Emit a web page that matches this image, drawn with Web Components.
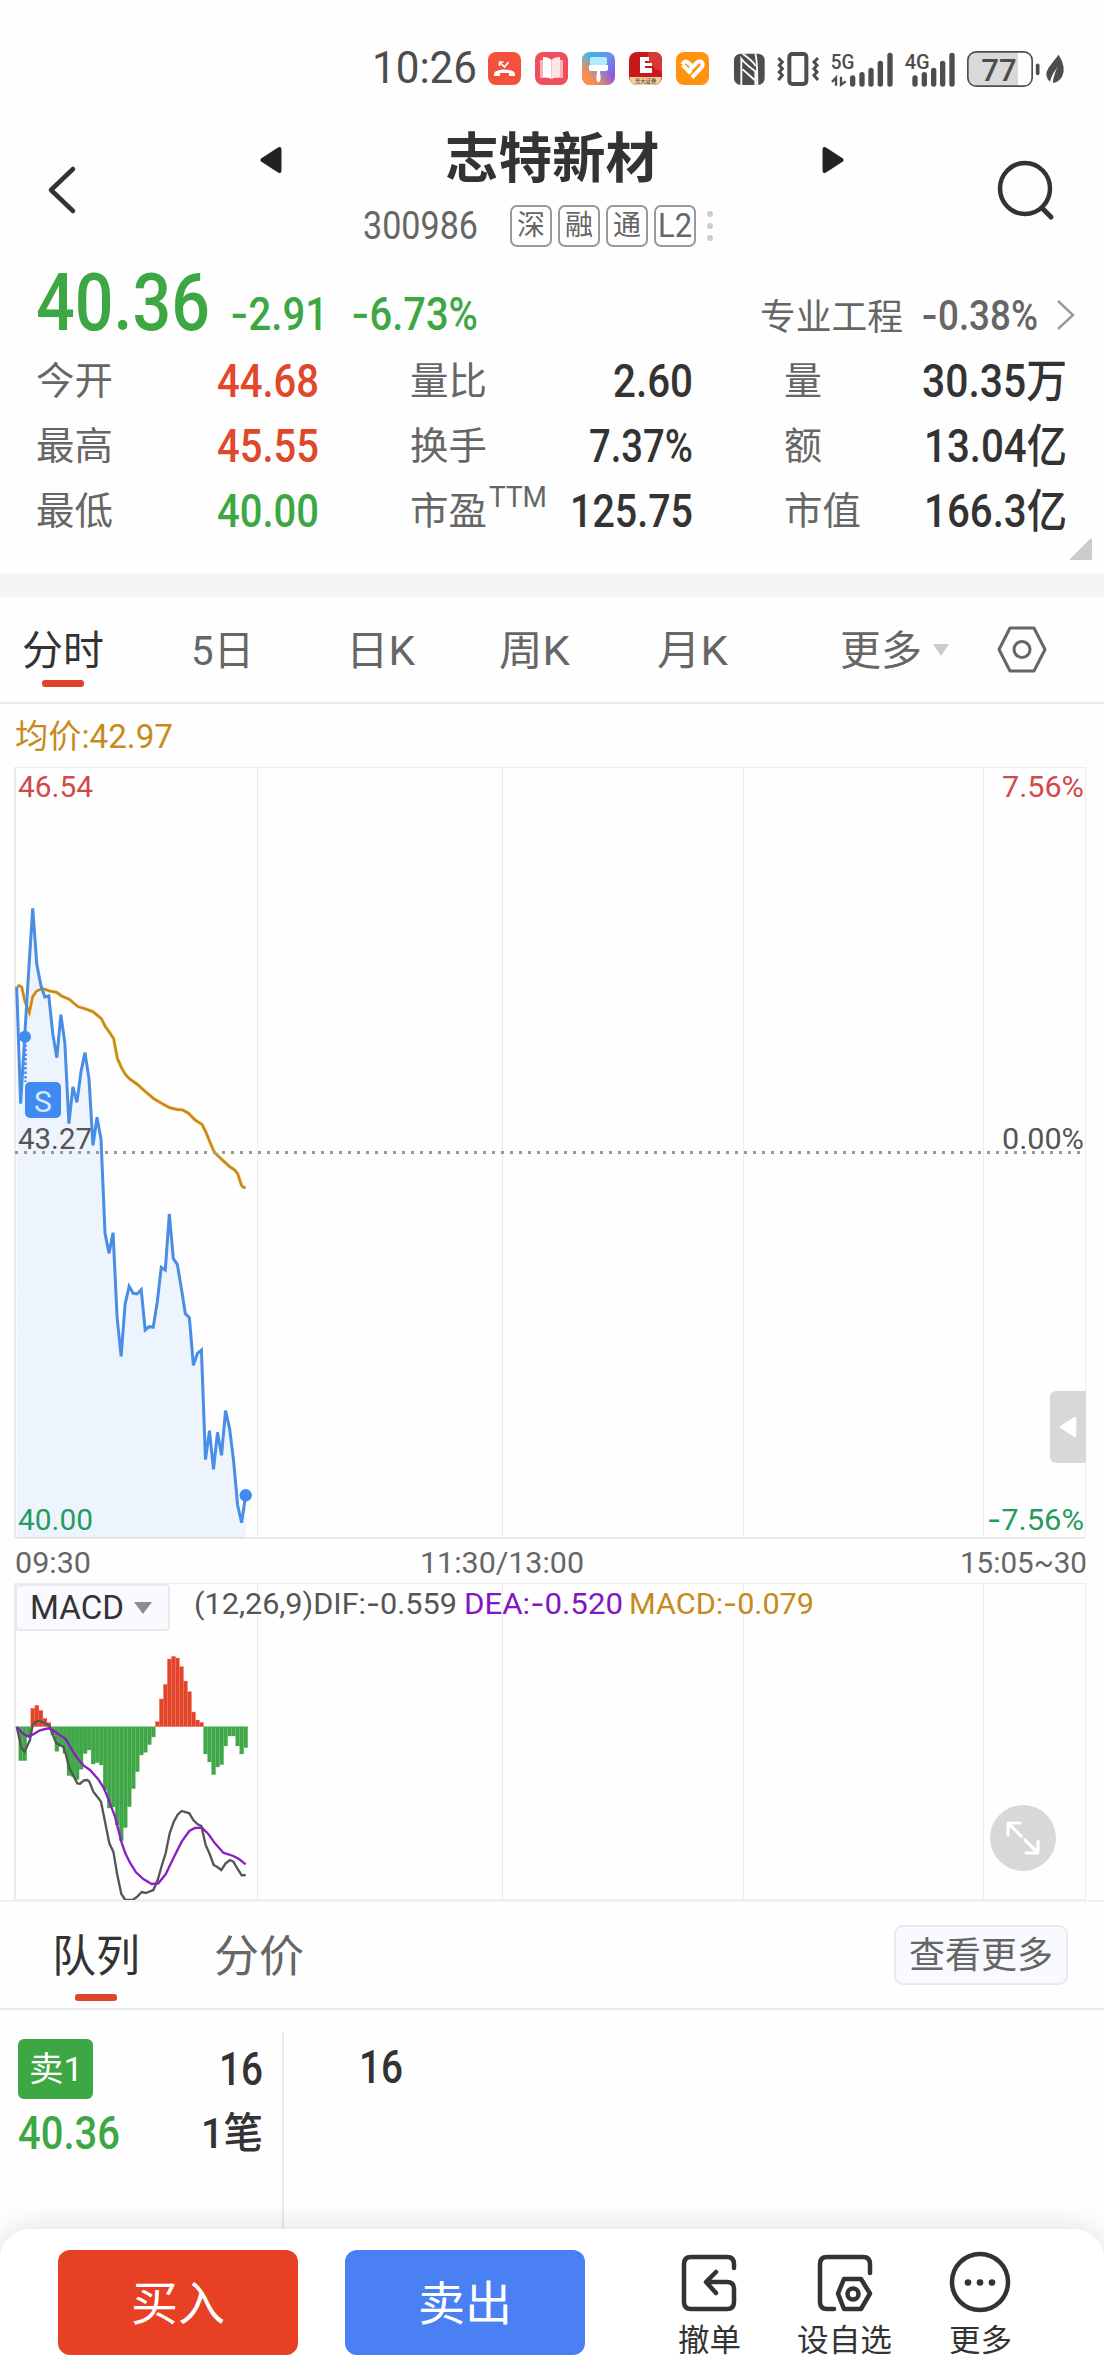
<!DOCTYPE html>
<html lang="zh-CN">
<head>
<meta charset="utf-8">
<title>志特新材 300986</title>
<style>
  body {
    margin: 0;
    width: 1104px;
    height: 2376px;
    overflow: hidden;
    background: #fefefe;
    color: #333;
    font-family: Roboto, "Noto Sans CJK SC", sans-serif;
  }
</style>
</head>
<body>
<stock-page></stock-page>

<script>
const define = (name, html, setup) => {
  const template = document.createElement("template");
  template.innerHTML = html;
  customElements.define(name, class extends HTMLElement {
    constructor() {
      super();
      this.attachShadow({ mode: "open" });
      this.shadowRoot.appendChild(template.content.cloneNode(true));
    }
    connectedCallback() {
      if (setup) setup(this, this.shadowRoot);
    }
  });
};

// One line of text, condensed or widened to the width in "w".
class FitText extends HTMLElement {
  constructor() {
    super();
    this.attachShadow({ mode: "open" });
    this.shadowRoot.innerHTML = `
      <style>
        :host { display: inline-block; white-space: nowrap; line-height: 1.2; flex: none; }
        span { display: inline-block; transform-origin: 0 50%; }
        i { font-style: normal; font-family: Inter, sans-serif; }
      </style>
      <span></span>`;
  }
  connectedCallback() {
    const span = this.shadowRoot.querySelector("span");
    const size = this.getAttribute("size");
    if (size) this.style.fontSize = size + "px";
    span.innerHTML = this.getAttribute("text").replace("-", "<i>-</i>");
    const w = Number(this.getAttribute("w"));
    this.style.width = w + "px";
    span.style.transform = `scaleX(${w / span.getBoundingClientRect().width})`;
  }
}
customElements.define("fit-text", FitText);

define("status-bar", `
<style>
  :host { display: flex; align-items: center; padding: 24px 0 0 372px; box-sizing: border-box; height: 112px; color: #4d4d4d; }
  .apps { display: flex; gap: 14px; margin-left: 11px; }
  .apps svg { width: 33px; height: 33px; overflow: visible; }
  .sys { width: 336px; height: 40px; margin: -2px 0 0 23px; }
  text { font-family: Roboto, "Noto Sans CJK SC", sans-serif; font-weight: 500; fill: #4d4d4d; }
</style>
<fit-text text="10:26" size="45" w="105"></fit-text>
<div class="apps">
  <svg viewBox="0 0 33 33"><rect width="33" height="33" rx="8" fill="#f2513b"/><path d="M6 22c0-6 21-6 21 0v2h-6v-3h-9v3H6z" fill="#fff"/><path d="M11.500 14v-4h4M11.500 10l5 5 4-5" fill="none" stroke="#fff" stroke-width="1.600"/></svg>
  <svg viewBox="0 0 33 33"><rect width="33" height="33" rx="8" fill="#ef4e5c"/><path d="M5 8h9v18H5z" fill="#f9b3b8"/><path d="M28 8h-8v18h8z" fill="#f9b3b8"/><path d="M8 5q6 0 8.500 3v19q-3-2-8.500-2z" fill="#fff"/><path d="M25 5q-6 0-8.500 3v19q3-2 8.500-2z" fill="#fde4e5"/></svg>
  <svg viewBox="0 0 33 33"><defs><linearGradient id="a" x1="0" y1="0" x2="1" y2="1"><stop stop-color="#25c2f2"/><stop offset=".5" stop-color="#6b8fe8"/><stop offset="1" stop-color="#a23be0"/></linearGradient><linearGradient id="b" x1="1" y1="0" x2="0" y2="1"><stop offset=".4" stop-color="#ff9c4a" stop-opacity="0"/><stop offset=".8" stop-color="#ff8c4a"/></linearGradient></defs><rect width="33" height="33" rx="8" fill="url(#a)"/><rect width="33" height="33" rx="8" fill="url(#b)"/><rect x="8" y="5" width="17" height="8" rx="2" fill="#b5ecfa"/><path d="M7 13h19v4q0 2-3 2h-5v3h-3v-3h-5q-3 0-3-2z" fill="#fff"/><rect x="14.500" y="21" width="4" height="9" rx="2" fill="#fff"/></svg>
  <svg viewBox="0 0 33 33"><rect width="33" height="33" rx="8" fill="#c8181c"/><path d="M20 0q-6 12 13 20V8q0-8-8-8z" fill="#d5393a"/><path d="M.5 25h32q-1 8-8 8H8q-7 0-7.500-8z" fill="#f3cf9c"/><path d="M11 5h9v4h-4v2h7v3h-7v2h7v5H11z" fill="#fff"/><text x="6" y="30.500" font-size="5.300">光大证券</text></svg>
  <svg viewBox="0 0 33 33"><rect width="33" height="33" rx="8" fill="#ff9310"/><path d="M6.500 12.500q2-5 6-1.500l4 3.500M11 20.500L21 10.500q3-2.500 5 0 1.500 2.500-.500 5L16 25.500M6.500 13l8.500 8" fill="none" stroke="#fff" stroke-width="4"/></svg>
</div>
<svg class="sys" viewBox="36 45 1008 120">
  <rect x="42" y="65" width="92" height="94" rx="20" fill="#4d4d4d"/>
  <path d="M64 159V80q10 14 42 38v41M68 65l10 8q28 22 28 30M106 65q6 20 6 94M68 112l36 32" stroke="#fefefe" stroke-width="5.500" fill="none"/>
  <rect x="208" y="66" width="51" height="90" rx="9" fill="none" stroke="#4d4d4d" stroke-width="12"/>
  <path d="M175 78l12 12-9 10 9 10-9 10 9 10-12 14M294 78l-12 12 9 10-9 10 9 10-9 10 12 14" fill="none" stroke="#4d4d4d" stroke-width="9"/>
  <text x="332" y="110" font-size="63" textLength="71" lengthAdjust="spacingAndGlyphs">5G</text>
  <path d="M348 161v-24l-12 13M363 134v24l14-10" fill="none" stroke="#4d4d4d" stroke-width="7"/>
  <path d="M398 138v18M426 128v28M453 115v41M481 94v62M510 70v86M585 138v18M613 128v28M641 115v41M668 94v62M696 70v86" stroke="#4d4d4d" stroke-width="16" stroke-linecap="round"/>
  <text x="554" y="110" font-size="63" textLength="75" lengthAdjust="spacingAndGlyphs">4G</text>
  <path d="M769 60h125v103H769q-25 0-25-25V85q0-25 25-25z" fill="#d9d9d9"/>
  <rect x="743.500" y="59.500" width="193" height="103" rx="25" fill="none" stroke="#4d4d4d" stroke-width="5"/>
  <text x="784" y="147" font-size="96" textLength="106" lengthAdjust="spacingAndGlyphs">77</text>
  <path d="M953 100v24" stroke="#4d4d4d" stroke-width="11" stroke-linecap="round"/>
  <path d="M1016 68q24 38 10 66-11 18-28 18 6-34 16-48-18 20-24 45-20-18-4-42 16-22 30-39z" fill="#4d4d4d"/>
</svg>`);

define("stock-header", `
<style>
  :host { display: flex; height: 150px; padding: 0 49px 0 47px; }
  .back, .search { margin-top: 48px; flex: none; }
  .search { margin-left: auto; }
  .mid { width: 584px; margin-left: 183px; display: flex; flex-direction: column; align-items: stretch; }
  .name { display: flex; align-items: center; justify-content: space-between; height: 92px; padding-top: 4px; box-sizing: border-box; font-weight: 700; }
  .code { display: flex; align-items: center; height: 44px; margin: 0 0 0 103px; color: #666; }
  .tag { box-sizing: border-box; width: 42px; height: 42px; margin-right: 6px; border: 2px solid #999; border-radius: 7px; font-size: 28px; display: flex; align-items: center; justify-content: center; line-height: 36px; }
  .tags { display: flex; margin-left: 32px; align-items: center; }
</style>
<svg class="back" width="30" height="60" viewBox="0 0 30 60"><path d="M26 9L4 30l22 21" fill="none" stroke="#333" stroke-width="4.500" stroke-linecap="round" stroke-linejoin="round"/></svg>
<div class="mid">
  <div class="name">
    <svg width="22" height="28" viewBox="0 0 22 28"><path d="M2.500 14L19.500 3v22z" fill="#222" stroke="#222" stroke-width="4" stroke-linejoin="round"/></svg>
    <fit-text text="志特新材" size="54" w="214"></fit-text>
    <svg width="22" height="28" viewBox="0 0 22 28"><path d="M19.500 14L2.500 3v22z" fill="#222" stroke="#222" stroke-width="4" stroke-linejoin="round"/></svg>
  </div>
  <div class="code">
    <fit-text text="300986" size="39" w="115"></fit-text>
    <div class="tags">
      <div class="tag">深</div><div class="tag">融</div><div class="tag">通</div><div class="tag"><fit-text text="L2" size="33" w="34"></fit-text></div>
      <svg width="16" height="32" viewBox="0 0 16 32" fill="#ccc"><circle cx="8" cy="4" r="3"/><circle cx="8" cy="16" r="3"/><circle cx="8" cy="28" r="3"/></svg>
    </div>
  </div>
</div>
<svg class="search" width="58" height="62" viewBox="0 0 58 62"><ellipse cx="28" cy="28.500" rx="25" ry="25.500" fill="none" stroke="#333" stroke-width="4.500"/><path d="M45 48l9 9" stroke="#333" stroke-width="5" stroke-linecap="round"/></svg>`);

// Label on the left, number on the right.
define("quote-cell", `
<style>
  :host { display: flex; align-items: center; justify-content: space-between; height: 65px; font-size: 38px; }
  .label { color: #666; display: flex; line-height: 46px; }
  sup { font-size: 29px; line-height: 20px; margin: -9px 0 0 2px; vertical-align: top; height: 20px; }
  ::slotted(fit-text) { font-weight: 500; }
  ::slotted([slot]) { font-weight: 400; }
</style>
<div class="label"><slot name="label"></slot><sup><slot name="sup"></slot></sup></div>
<slot></slot>`);

define("quote-panel", `
<style>
  :host { display: block; height: 311px; position: relative; border-bottom: 24px solid #f4f4f4; }
  .price { display: flex; align-items: baseline; height: 94px; margin-top: -7px; padding-left: 36px; color: #3da843; }
  .price fit-text { font-weight: 500; }
  .sector { color: #666; margin-left: auto; padding-right: 29px; display: flex; align-items: baseline; }
  .sector fit-text:first-child { font-weight: 400; }
  .grid { display: grid; grid-template-columns: 283px 283px 283px; column-gap: 91px; padding-left: 36px; }
  .up { color: #e0482c; }
  .down { color: #3da843; }
  .corner { position: absolute; right: 12px; bottom: 12px; }
</style>
<div class="price">
  <fit-text text="40.36" size="80" w="174"></fit-text>
  <fit-text text="-2.91" size="46" w="98" style="margin-left: 20px"></fit-text>
  <fit-text text="-6.73%" size="46" w="127" style="margin-left: 23px"></fit-text>
  <div class="sector">
    <fit-text text="专业工程" size="36" w="143"></fit-text>
    <fit-text text="-0.38%" size="42" w="117" style="margin-left: 18px"></fit-text>
    <svg width="20" height="30" viewBox="0 0 20 30" style="margin-left: 17px"><path d="M3 1l15 14L3 29" fill="none" stroke="#999" stroke-width="2.400"/></svg>
  </div>
</div>
<div class="grid">
  <quote-cell><fit-text slot="label" text="今开" size="38" w="77"></fit-text><fit-text class="up" text="44.68" size="46" w="102"></fit-text></quote-cell>
  <quote-cell><fit-text slot="label" text="量比" size="38" w="77"></fit-text><fit-text text="2.60" size="46" w="80"></fit-text></quote-cell>
  <quote-cell><fit-text slot="label" text="量" size="38" w="38"></fit-text><fit-text text="30.35万" size="46" w="145"></fit-text></quote-cell>
  <quote-cell><fit-text slot="label" text="最高" size="38" w="77"></fit-text><fit-text class="up" text="45.55" size="46" w="102"></fit-text></quote-cell>
  <quote-cell><fit-text slot="label" text="换手" size="38" w="77"></fit-text><fit-text text="7.37%" size="46" w="104"></fit-text></quote-cell>
  <quote-cell><fit-text slot="label" text="额" size="38" w="38"></fit-text><fit-text text="13.04亿" size="46" w="143"></fit-text></quote-cell>
  <quote-cell><fit-text slot="label" text="最低" size="38" w="77"></fit-text><fit-text class="down" text="40.00" size="46" w="102"></fit-text></quote-cell>
  <quote-cell><fit-text slot="label" text="市盈" size="38" w="77"></fit-text><fit-text slot="sup" text="TTM" size="29" w="58"></fit-text><fit-text text="125.75" size="46" w="123"></fit-text></quote-cell>
  <quote-cell><fit-text slot="label" text="市值" size="38" w="77"></fit-text><fit-text text="166.3亿" size="46" w="143"></fit-text></quote-cell>
</div>
<svg class="corner" width="23" height="23" viewBox="0 0 23 23"><path d="M23 1v20q0 1-1 1H1Q0 22 1 21L21 1q2-1 2 0z" fill="#ccc"/></svg>`);

define("tab-item", `
<style>
  :host { display: flex; flex-direction: column; align-items: center; color: #666; }
  :host([active]) { color: #333; }
  i { width: 42px; height: 7px; border-radius: 3px; margin-top: var(--gap, 4px); }
  :host([active]) i { background: #dc452a; }
</style>
<slot></slot><i></i>`);

define("period-tabs", `
<style>
  :host { display: flex; align-items: flex-start; box-sizing: border-box; height: 107px; border-bottom: 2px solid #e9e9e9; padding: 30px 0 0 22px; }
  tab-item { margin-right: var(--m); }
  svg { margin-top: -2px; }
</style>
<tab-item active style="--m: 87px"><fit-text text="分时" size="41" w="82"></fit-text></tab-item>
<tab-item style="--m: 92px"><fit-text text="5日" size="41" w="63"></fit-text></tab-item>
<tab-item style="--m: 84px"><fit-text text="日K" size="41" w="69"></fit-text></tab-item>
<tab-item style="--m: 87px"><fit-text text="周K" size="41" w="71"></fit-text></tab-item>
<tab-item style="--m: 112px"><fit-text text="月K" size="41" w="71"></fit-text></tab-item>
<tab-item style="--m: 10px"><fit-text text="更多" size="41" w="82"></fit-text></tab-item>
<svg width="18" height="50" viewBox="0 0 18 50"><path d="M1 19h16l-8 12z" fill="#ccc"/></svg>
<svg width="50" height="50" viewBox="0 0 50 50" style="margin-left: 47px" fill="none" stroke="#666" stroke-width="3"><path d="M13 3h24l11 21.500L37 46H13L2 24.500z" stroke-linejoin="round"/><circle cx="25" cy="24.500" r="8"/></svg>`);

// Intraday prices and moving average; the plot units are a third of a pixel.
const prices = [380, 731, 530, 330, 145, 312, 375, 411, 408, 522, 593, 464, 550, 791, 681, 727, 636, 578, 655, 856,
  772, 838, 1120, 1180, 1118, 1372, 1489, 1332, 1279, 1300, 1302, 1289, 1410, 1400, 1402, 1326, 1222, 1230, 1062, 1196,
  1213, 1285, 1361, 1373, 1516, 1480, 1470, 1799, 1712, 1828, 1717, 1786, 1652, 1705, 1802, 1935, 1988, 1906];
const average = "52,378 58,377 65,381 75,425 88,458 98,410 110,393 123,387 135,388 148,393 170,397 185,408 208,418 234,440 255,446 279,455 304,476 316,500 328,516 341,536 352,595 364,622 376,643 388,656 412,673 435,694 460,715 485,730 509,743 530,748 548,750 565,759 585,780 606,793 618,817 630,847 643,877 660,893 688,919 703,929 713,941 724,975 730,982 737,983";
const pointX = (i) => (50 + 12.05 * i).toFixed(1);

define("time-chart", `
<style>
  :host { display: block; position: relative; height: 879px; }
  .avg { height: 63px; padding: 2px 0 0 15px; box-sizing: border-box; display: flex; align-items: center; color: #c88a20; }
  svg { display: block; }
  text { font-family: Roboto, sans-serif; font-size: 30px; }
  .side { position: absolute; left: 1050px; top: 687px; width: 36px; height: 72px; border-radius: 6px 0 0 6px; background: #d8d8d8; display: flex; align-items: center; justify-content: center; }
</style>
<div class="avg"><fit-text text="均价:42.97" size="33" w="158"></fit-text></div>
<svg width="1104" height="816" viewBox="0 767 1104 816">
  <path d="M257.500 768v769M502.500 768v769M743.500 768v769M983.500 768v769M1085.500 768v769M15 767.500H1086" stroke="#ededed" fill="none"/>
  <path d="M15 767v771M14 1538H1086" stroke="#ebebeb" stroke-width="2"/>
  <g transform="translate(0 860) scale(.33333)">
    <path id="area" fill="#3f8bf3" fill-opacity=".09"/>
    <polyline id="average" fill="none" stroke="#fff2b8" stroke-width="13"/>
    <polyline id="average2" fill="none" stroke="#c68920" stroke-width="8"/>
    <polyline id="line" fill="none" stroke="#4a8de4" stroke-width="9"/>
  </g>
  <path d="M15 1152.500H1086" stroke="#999" stroke-width="3" stroke-dasharray="3 6"/>
  <path d="M25.500 1040v42" stroke="#3f8bf3" stroke-width="2.500" stroke-dasharray="2.500 2"/>
  <circle cx="25" cy="1036.700" r="6" fill="#3f8bf3"/>
  <circle cx="245.700" cy="1495.300" r="6.200" fill="#3f8bf3"/>
  <rect x="25" y="1082" width="36" height="36" rx="5" fill="#3f8bf3"/>
  <text x="43" y="1111.500" text-anchor="middle" fill="#d9e8fd">S</text>
  <text x="18" y="797" textLength="75" lengthAdjust="spacingAndGlyphs" fill="#d04a4a">46.54</text>
  <text x="1002" y="797" textLength="82" lengthAdjust="spacingAndGlyphs" fill="#d04a4a">7.56%</text>
  <text x="18" y="1149" textLength="74" lengthAdjust="spacingAndGlyphs" fill="#555">43.27</text>
  <text x="1002" y="1149" textLength="82" lengthAdjust="spacingAndGlyphs" fill="#555">0.00%</text>
  <text x="18" y="1530" textLength="75" lengthAdjust="spacingAndGlyphs" fill="#249c5e">40.00</text>
  <text x="987" y="1530" textLength="97" lengthAdjust="spacingAndGlyphs" fill="#249c5e"><tspan font-family="Inter">-</tspan>7.56%</text>
  <g fill="#666">
    <text x="15" y="1572.500" textLength="76" lengthAdjust="spacingAndGlyphs">09:30</text>
    <text x="420" y="1572.500" textLength="164" lengthAdjust="spacingAndGlyphs">11:30/13:00</text>
    <text x="960" y="1572.500" textLength="127" lengthAdjust="spacingAndGlyphs">15:05~30</text>
  </g>
</svg>
<div class="side"><svg width="18" height="22" viewBox="0 0 18 22"><path d="M2 11L16 2v18z" fill="#fff" stroke="#fff" stroke-width="2.500" stroke-linejoin="round"/></svg></div>`,
(host, root) => {
  const points = prices.map((y, i) => `${pointX(i)},${y}`);
  root.getElementById("line").setAttribute("points", points.join(" "));
  root.getElementById("area").setAttribute("d", `M50 2034L${points.join("L")}L737 2034z`);
  root.getElementById("average").setAttribute("points", average);
  root.getElementById("average2").setAttribute("points", average);
});

// Bar ends, with the zero line at 500.
const bars = [500, 602, 602, 530, 445, 436, 451, 475, 488, 525, 574, 555, 580, 647, 650, 659, 628, 581, 570, 612,
  608, 615, 690, 744, 741, 795, 842, 803, 740, 686, 635, 585, 577, 554, 531, 485, 417, 373, 297, 289,
  294, 320, 363, 395, 456, 480, 487, 582, 606, 644, 621, 614, 558, 528, 528, 558, 582, 563];

define("macd-chart", `
<style>
  :host { display: block; position: relative; height: 317px; border-bottom: 2px solid #f1f1f1; }
  svg { display: block; }
  text { font-family: Roboto, sans-serif; font-size: 30px; }
  .pick { position: absolute; left: 15px; top: 1px; width: 155px; height: 47px; box-sizing: border-box; border: 2px solid #e9e9e9; border-radius: 4px; background: #f8faff; display: flex; align-items: center; padding-left: 13px; color: #333; }
  .zoom { position: absolute; left: 990px; top: 222px; }
</style>
<svg width="1104" height="317" viewBox="0 1583 1104 317">
  <path d="M257.500 1583v317M502.500 1583v317M743.500 1583v317M983.500 1583v317M1085.500 1583v317M15 1583.500H1086M15 1899.500H1086" stroke="#ededed" fill="none"/>
  <path d="M15 1583v317" stroke="#ebebeb" stroke-width="2"/>
  <g transform="translate(0 1560) scale(.33333)" fill="none">
    <g id="bars"></g>
    <polyline points="50,500 58,535 65,565 73,575 80,562 90,540 98,495 108,485 117,482 135,490 148,497 155,515 168,548 178,555 190,560 198,585 208,625 219,645 232,670 240,671 252,661 262,660 268,665 280,695 290,708 303,725 312,770 328,850 340,875 352,945 364,1002 376,1020 398,1020 412,1010 425,996 437,999 460,990 473,960 485,918 497,880 509,820 521,786 533,764 545,753 568,760 580,780 592,792 604,798 617,855 629,882 641,915 652,921 664,930 677,910 690,900 700,905 713,927 725,946 737,945" stroke="#555" stroke-width="7"/>
    <polyline points="50,500 70,522 86,530 100,523 120,511 145,505 158,510 175,522 198,538 215,568 232,595 250,616 270,630 295,658 312,685 328,725 345,770 364,845 376,880 390,908 408,937 430,957 455,972 475,970 497,943 520,895 545,845 568,813 585,804 606,803 625,822 645,850 670,878 700,888 718,898 737,913" stroke="#8a1fc4" stroke-width="7"/>
  </g>
  <text x="194" y="1614" textLength="263" lengthAdjust="spacingAndGlyphs" fill="#555">(12,26,9)DIF:<tspan font-family="Inter">-</tspan>0.559</text>
  <text x="464" y="1614" textLength="159" lengthAdjust="spacingAndGlyphs" fill="#8216c0">DEA:<tspan font-family="Inter">-</tspan>0.520</text>
  <text x="629" y="1614" textLength="185" lengthAdjust="spacingAndGlyphs" fill="#c68920">MACD:<tspan font-family="Inter">-</tspan>0.079</text>
</svg>
<div class="pick"><fit-text text="MACD" size="33" w="94"></fit-text><svg width="18" height="12" viewBox="0 0 18 12" style="margin-left: 10px"><path d="M0 0h18l-9 12z" fill="#8c8c8c"/></svg></div>
<svg class="zoom" width="66" height="66" viewBox="0 0 66 66"><circle cx="33" cy="33" r="33" fill="#d8d8d8"/><path d="M30 18H19q-1 0-1 1v11M19 19l12 12M36 48h11q1 0 1-1V36M47 47L35 35" fill="none" stroke="#fff" stroke-width="3.200" stroke-linecap="round"/></svg>`,
(host, root) => {
  root.getElementById("bars").innerHTML = bars.map((y, i) => {
    const up = y < 500;
    return `<rect x="${(pointX(i) - 5.700).toFixed(1)}" y="${up ? y : 500}" width="12.050" height="${Math.abs(y - 500)}"
      fill="${up ? "#e24429" : "#3fa747"}" stroke="${up ? "#ee7a62" : "#69bd6c"}" stroke-width="1"/>`;
  }).join("");
});

define("queue-panel", `
<style>
  :host { display: block; height: 327px; --gap: 10px; }
  .tabs { display: flex; align-items: flex-start; justify-content: space-between; box-sizing: border-box; height: 108px; border-bottom: 2px solid #e9e9e9; padding: 29px 36px 0 52px; }
  .left { display: flex; gap: 74px; }
  .more { box-sizing: border-box; width: 174px; height: 60px; margin-top: -6px; border: 2px solid #e9e9e9; border-radius: 9px; background: #f8faff; color: #666; display: flex; align-items: center; justify-content: center; padding-top: 3px; }
  .book { display: flex; height: 197px; padding: 22px 0 0 18px; font-weight: 500; }
  .level { width: 264px; border-right: 2px solid #ebebeb; }
  .row { display: flex; align-items: center; justify-content: space-between; height: 64px; padding-right: 19px; }
  .row > fit-text { margin-top: 2px; }
  .badge { width: 75px; height: 60px; border-radius: 6px; background: #3da843; color: #fff; display: flex; align-items: center; justify-content: center; font-weight: 400; }
</style>
<div class="tabs">
  <div class="left">
    <tab-item active><fit-text text="队列" size="44" w="88"></fit-text></tab-item>
    <tab-item><fit-text text="分价" size="44" w="90"></fit-text></tab-item>
  </div>
  <div class="more"><fit-text text="查看更多" size="36" w="144"></fit-text></div>
</div>
<div class="book">
  <div class="level">
    <div class="row" style="margin-top: 5px"><div class="badge"><fit-text text="卖1" size="34" w="54"></fit-text></div><fit-text text="16" size="46" w="44"></fit-text></div>
    <div class="row"><fit-text text="40.36" size="46" w="102" style="color: #3da843"></fit-text><fit-text text="1笔" size="42" w="62"></fit-text></div>
  </div>
  <fit-text text="16" size="46" w="44" style="margin: 8px 0 0 75px"></fit-text>
</div>`);

define("trade-button", `
<style>
  :host { display: flex; align-items: center; justify-content: center; box-sizing: border-box; width: 240px; height: 105px; padding-top: 4px; border-radius: 12px; color: #fff; flex: none; }
</style>
<slot></slot>`);

define("trade-action", `
<style>
  :host { display: flex; flex-direction: column; align-items: center; gap: 7px; color: #333; flex: none; }
</style>
<slot name="icon"></slot><slot></slot>`);

define("trade-bar", `
<style>
  :host { display: flex; align-items: flex-start; box-sizing: border-box; height: 147px; padding: 21px 0 0 58px; background: #fff; border-radius: 30px 30px 0 0; box-shadow: 0 0 32px rgba(0, 0, 0, .13); position: relative; }
  svg { fill: none; stroke: #333; stroke-width: 4.500; stroke-linecap: round; stroke-linejoin: round; }
  trade-action { margin-top: 1px; }
</style>
<trade-button style="background: #e74025"><fit-text text="买入" size="47" w="94"></fit-text></trade-button>
<trade-button style="background: #4b7ff4; margin-left: 47px"><fit-text text="卖出" size="47" w="94"></fit-text></trade-button>
<trade-action style="margin-left: 92px">
  <svg slot="icon" width="64" height="64" viewBox="0 0 64 64"><path d="M57 17V13q0-7-7-7H14q-7 0-7 7v38q0 7 7 7h36q7 0 7-7V38q0-7-7-7H30M39 21L29 31l10 11"/></svg>
  <fit-text text="撤单" size="31" w="63"></fit-text>
</trade-action>
<trade-action style="margin-left: 56px">
  <svg slot="icon" width="64" height="64" viewBox="0 0 64 64"><path d="M57 22V13q0-7-7-7H14q-7 0-7 7v38q0 7 7 7h7M31 28h17l9 14.500L48 58H31l-6-15.500z"/><circle cx="40" cy="43" r="5.500"/></svg>
  <fit-text text="设自选" size="31" w="95"></fit-text>
</trade-action>
<trade-action style="margin-left: 56px">
  <svg slot="icon" width="64" height="64" viewBox="0 0 64 64"><circle cx="32" cy="31" r="28"/><g fill="#333" stroke="none"><circle cx="20" cy="31.500" r="3.300"/><circle cx="32" cy="31.500" r="3.300"/><circle cx="44" cy="31.500" r="3.300"/></g></svg>
  <fit-text text="更多" size="31" w="63"></fit-text>
</trade-action>`);

define("stock-page", `
<style>
  :host { display: flex; flex-direction: column; width: 1104px; height: 2376px; }
  :host > * { flex: none; }
</style>
<status-bar></status-bar>
<stock-header></stock-header>
<quote-panel></quote-panel>
<period-tabs></period-tabs>
<time-chart></time-chart>
<macd-chart></macd-chart>
<queue-panel></queue-panel>
<trade-bar></trade-bar>`);
</script>
</body>
</html>
